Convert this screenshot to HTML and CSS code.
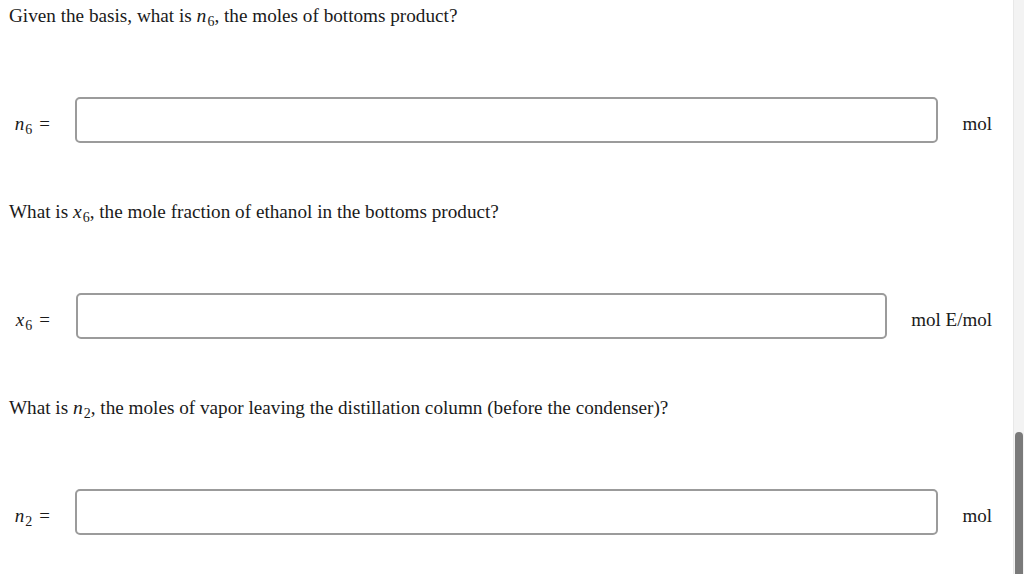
FILE: index.html
```html
<!DOCTYPE html>
<html>
<head>
<meta charset="utf-8">
<link rel="stylesheet" href="styles.css">
</head>
<body>
<main class="page">
  <section class="block">
    <p class="question">Given the basis, what is <span class="mv">n<sub>6</sub></span>, the moles of bottoms product?</p>
    <div class="answer-row">
      <label class="lbl"><span class="mv">n<sub>6</sub></span><span class="eq">=</span></label>
      <input class="field" type="text">
      <span class="unit">mol</span>
    </div>
  </section>
  <section class="block">
    <p class="question">What is <span class="mv">x<sub>6</sub></span>, the mole fraction of ethanol in the bottoms product?</p>
    <div class="answer-row">
      <label class="lbl"><span class="mv">x<sub>6</sub></span><span class="eq">=</span></label>
      <input class="field field-x" type="text">
      <span class="unit">mol E/mol</span>
    </div>
  </section>
  <section class="block">
    <p class="question">What is <span class="mv">n<sub>2</sub></span>, the moles of vapor leaving the distillation column (before the condenser)?</p>
    <div class="answer-row">
      <label class="lbl"><span class="mv">n<sub>2</sub></span><span class="eq">=</span></label>
      <input class="field" type="text">
      <span class="unit">mol</span>
    </div>
  </section>
</main>
<div class="scrollbar"><div class="thumb"></div></div>
</body>
</html>
```
FILE: styles.css
```css
html, body {
  margin: 0;
  padding: 0;
  background: #ffffff;
  overflow: hidden;
}
body {
  font-family: "Liberation Serif", "Times New Roman", serif;
  font-size: 19px;
  color: #1a1a1a;
}
.page {
  padding: 5px 32px 0 9px;
}
.block {
  height: 196px;
}
.question {
  margin: 0;
  height: 22px;
  line-height: 22px;
  font-size: 19.2px;
}
.mv {
  font-style: italic;
  font-size: 19.6px;
}
.mv sub {
  font-style: normal;
  font-size: 14px;
  vertical-align: -4px;
  line-height: 0;
  margin-left: 1px;
}
.answer-row {
  margin-top: 70px;
  display: flex;
  align-items: center;
  height: 46px;
}
.lbl {
  width: 41px;
  text-align: right;
  flex: none;
  margin-right: 25px;
  padding-top: 8px;
  white-space: nowrap;
}
.lbl .mv {
  font-size: 19px;
}
.lbl .mv sub {
  font-size: 14px;
}
.eq {
  margin-left: 7px;
  font-size: 19px;
}
.field {
  flex: 1;
  box-sizing: border-box;
  height: 46px;
  border: 2px solid #9b9b9b;
  border-radius: 5px;
  background: #fff;
  margin: 0;
  outline: none;
}
.field-x {
  margin-left: 1px;
}
.unit {
  flex: none;
  margin-left: 24px;
  padding-top: 8px;
}
.scrollbar {
  position: fixed;
  top: 0;
  right: 0;
  width: 10px;
  height: 100%;
  background: #f3f3f3;
  border-left: 1px solid #e8e8e8;
}
.thumb {
  position: absolute;
  top: 432px;
  left: 1px;
  width: 8px;
  height: 160px;
  border-radius: 4px;
  background: #7a7a7a;
}
```
